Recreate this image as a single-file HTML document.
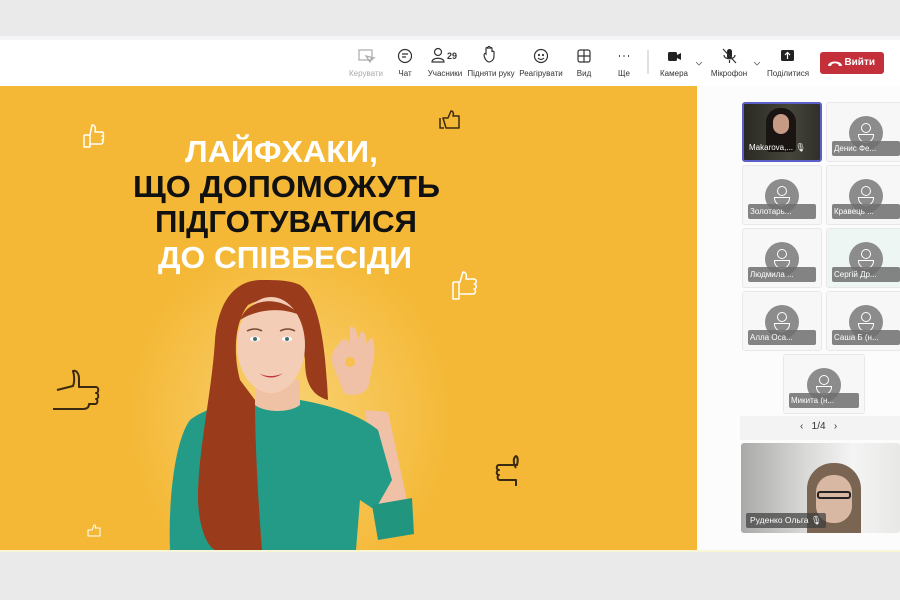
<!DOCTYPE html>
<html><head><meta charset="utf-8"><style>
body{margin:0;width:900px;height:600px;overflow:hidden;background:#ebeaea;font-family:"Liberation Sans",sans-serif;position:relative}
.abs{position:absolute}
.tb{left:0;top:40px;width:900px;height:46px;background:#fff}
.lbl{position:absolute;top:69px;font-size:8px;color:#333;transform:translateX(-50%);white-space:nowrap}
.tile{position:absolute;background:#f7f7f7;border:1px solid #e8e8e8;border-radius:3px;width:78px;height:58px;overflow:hidden}
.av{position:absolute;left:50%;top:13px;width:34px;height:34px;margin-left:-17px;border-radius:50%;background:#8c8c8c}
.av:before{content:"";position:absolute;left:12px;top:7px;width:8px;height:8px;border:1.3px solid #fff;border-radius:50%}
.av:after{content:"";position:absolute;left:9px;top:18px;width:14px;height:7px;border:1.3px solid #fff;border-radius:0 0 8px 8px}
.nm{position:absolute;left:5px;right:5px;bottom:5px;height:15px;background:rgba(110,110,110,.85);border-radius:2px;color:#fff;font-size:8px;line-height:15px;padding-left:2px;white-space:nowrap;overflow:hidden;z-index:2}
</style></head><body>
<div class="abs" style="left:0;top:0;width:900px;height:36px;background:#ebeaea"></div>
<div class="abs" style="left:0;top:36px;width:900px;height:4px;background:#f5f5f7"></div>
<div class="abs tb"></div>
<svg class="abs" style="left:0;top:40px" width="900" height="46" fill="none" stroke="#333" stroke-width="1.2">
<rect x="359" y="10" width="13" height="10" stroke="#aaa"/><path d="M366 16l4 6 1-3 3-1z" stroke="#aaa"/>
<circle cx="405" cy="16" r="6.5"/><path d="M402 14h6M402 17h4"/>
<circle cx="438" cy="12" r="3.5"/><path d="M432 22c0-5 12-5 12 0z"/>
<path d="M486 20c-3-4-2-8 0-6V9c0-2 2-2 2 0V8c0-2 2-2 2 0v1c0-2 2-2 2 0v3c0-1 2-1 2 0v4c0 4-3 6-5 6s-2-1-3-2z"/>
<circle cx="541" cy="16" r="6.5"/><circle cx="539" cy="15" r=".5"/><circle cx="543" cy="15" r=".5"/><path d="M538 18c2 2 4 2 6 0"/>
<rect x="578" y="10" width="12" height="12" rx="2"/><path d="M584 10v12M578 16h12"/>
<path d="M619 16h1M623.5 16h1M628 16h1" stroke-width="1.8"/>
<path d="M648 10v24" stroke="#ccc"/>
<rect x="668" y="12" width="9" height="9" rx="1.5" fill="#222" stroke="none"/><path d="M677 15l4-2v7l-4-2z" fill="#222" stroke="none"/>
<path d="M696 22l3 3 3-3" stroke="#666" stroke-width=".8"/>
<rect x="727" y="9" width="5" height="10" rx="2.5" fill="#222" stroke="none"/><path d="M724 15c0 5 11 5 11 0M729.5 20v3M723 9l13 14"/>
<path d="M754 22l3 3 3-3" stroke="#666" stroke-width=".8"/>
<rect x="781" y="10" width="13" height="11" rx="1.5" fill="#222" stroke="none"/><path d="M787.5 19v-6M785 15l2.5-2.5 2.5 2.5" stroke="#fff"/>
</svg>
<span class="lbl" style="left:366px;color:#aaa">Керувати</span>
<span class="lbl" style="left:405px">Чат</span>
<span class="abs" style="left:447px;top:51px;font-size:9px;font-weight:bold;color:#333">29</span>
<span class="lbl" style="left:445px">Учасники</span>
<span class="lbl" style="left:491px">Підняти руку</span>
<span class="lbl" style="left:541px">Реагірувати</span>
<span class="lbl" style="left:584px">Вид</span>
<span class="lbl" style="left:624px">Ще</span>
<span class="lbl" style="left:674px">Камера</span>
<span class="lbl" style="left:729px">Мікрофон</span>
<span class="lbl" style="left:788px">Поділитися</span>
<div class="abs" style="left:820px;top:52px;width:64px;height:22px;background:#c4303a;border-radius:3px;color:#fff;font-size:10px;font-weight:bold;line-height:22px;text-align:right;box-sizing:border-box;padding-right:9px">Вийти</div>
<svg class="abs" style="left:827px;top:58px" width="16" height="10"><path d="M1 8c0-6 14-6 14 0l-3 0-1-2c-2-1-4-1-6 0l-1 2z" fill="#fff"/></svg>

<div class="abs" style="left:0;top:86px;width:697px;height:464px;background:radial-gradient(ellipse 180px 200px at 290px 330px,#f9d274,#f4b836 90%)"></div>
<div class="abs" style="left:697px;top:86px;width:203px;height:464px;background:#fcfcfc"></div>
<svg class="abs" style="left:0;top:0" width="697" height="550">
<g font-family="Liberation Sans,sans-serif" font-weight="bold" font-size="31">
<text x="185" y="162" fill="#fff" textLength="193" lengthAdjust="spacingAndGlyphs">ЛАЙФХАКИ,</text>
<text x="133" y="197" fill="#111" textLength="307" lengthAdjust="spacingAndGlyphs">ЩО ДОПОМОЖУТЬ</text>
<text x="155" y="232" fill="#111" textLength="262" lengthAdjust="spacingAndGlyphs">ПІДГОТУВАТИСЯ</text>
<text x="158" y="268" fill="#fff" textLength="254" lengthAdjust="spacingAndGlyphs">ДО СПІВБЕСІДИ</text>
</g>
<g fill="none" stroke-width="1.5" stroke-linejoin="round">
<path d="M84 135h6l2-10c3 0 4 3 3 7h7c2 0 2 4 0 4 2 0 2 4 0 4 2 0 1 4-1 4h-12M84 135v12h6v-12" stroke="#fff"/>
<path d="M443 118h5l3-7c2 0 3 2 2 5h6v12h-13zM440 118v10h4" stroke="#3a2a10"/>
<path d="M453 282h7l3-10c3 0 4 3 3 7h8c3 0 3 5 0 5 3 0 3 5 0 5 2 0 2 5-1 5h-13M453 282v17h6v-17" stroke="#fff"/>
<path d="M57 390l16-4c2-5 1-12 0-15 3-1 6 2 6 8v8h17c3 0 3 6 0 6 3 0 3 6 0 6 2 0 2 5-1 5h-6c0 4-3 5-6 5H53" stroke="#3a2a10" stroke-width="2"/>
<path d="M516 468c-3-5-3-10 0-12 2 1 2 5 1 9h-18c-3 0-3 5 0 5-3 0-3 5 0 5-2 0-2 5 1 5h16v6" stroke="#3a2a10" stroke-width="2"/>
<path d="M88 530h4l2-5c2 0 2 2 1 3h5v8h-12z" stroke="#fff" stroke-width="1"/>
</g>
<!-- woman -->
<path d="M365 410L388 412L408 505L378 510Z" fill="#f0c1a6"/>
<path d="M190 420C210 405 240 400 262 400L300 400C330 405 360 415 378 430L392 480L375 510L360 500L356 550L170 550C168 500 175 440 190 420Z" fill="#239b86"/>
<path d="M372 505L412 498L414 534L378 540Z" fill="#22957f"/>
<path d="M338 345c5-10 12-5 12 2l0-20c4-2 8 5 8 12l3-7c3-2 6 5 5 12l5-6c3 0 4 10 3 20l-5 25c0 10-15 15-25 10l-10-25c-5-10 0-20 4-23z" fill="#f0c1a6"/>
<circle cx="350" cy="362" r="5" fill="#f7c050"/>
<path d="M255 380h45v25c-10 8-35 8-45 0z" fill="#efc2a6"/>
<path d="M262 280C232 280 218 305 215 340C212 390 200 440 198 490C197 520 205 545 215 550L262 550C258 500 255 440 255 400L240 380C232 350 236 320 248 305C265 295 290 300 300 320L305 360C305 380 310 395 328 400C326 360 322 300 300 285C290 280 275 280 262 280Z" fill="#9a3c1c"/>
<ellipse cx="271" cy="345" rx="34" ry="48" fill="#f3cdb6"/>
<path d="M240 320c8-22 40-26 60-5-20-8-42-6-60 5z" fill="#9a3c1c"/>
<path d="M259 373c6 4 17 4 24 0c-7 6-17 6-24 0z" fill="#c2343f"/>
<ellipse cx="255" cy="339" rx="5" ry="2.5" fill="#fff"/><ellipse cx="287" cy="339" rx="5" ry="2.5" fill="#fff"/>
<circle cx="255" cy="339" r="2" fill="#4a6f72"/><circle cx="287" cy="339" r="2" fill="#4a6f72"/>
<path d="M247 331q8-4 15 0M280 331q8-4 15 0" stroke="#7a4a30" stroke-width="1.5" fill="none"/>
</svg>

<div class="tile" style="left:742px;top:102px;width:76px;height:56px;border:2px solid #5b5fc7;background:linear-gradient(90deg,#2a2a24,#46453a 60%,#30302a)"><div style="position:absolute;left:22px;top:4px;width:30px;height:44px;border-radius:14px 14px 4px 4px;background:#1a1412"></div><div style="position:absolute;left:29px;top:10px;width:16px;height:20px;border-radius:8px;background:#c79a86"></div><div class="nm" style="background:none;left:3px">Makarova,... 🎙</div></div>
<div class="tile" style="left:826px;top:102px"><div class="av"></div><div class="nm">Денис Фе...</div></div>
<div class="tile" style="left:742px;top:165px"><div class="av"></div><div class="nm">Золотарь...</div></div>
<div class="tile" style="left:826px;top:165px"><div class="av"></div><div class="nm">Кравець ...</div></div>
<div class="tile" style="left:742px;top:228px"><div class="av"></div><div class="nm">Людмила ...</div></div>
<div class="tile" style="left:826px;top:228px;background:#eef6f4"><div class="av"></div><div class="nm">Сергій Др...</div></div>
<div class="tile" style="left:742px;top:291px"><div class="av"></div><div class="nm">Алла Оса...</div></div>
<div class="tile" style="left:826px;top:291px"><div class="av"></div><div class="nm">Саша Б (н...</div></div>
<div class="tile" style="left:783px;top:354px;width:80px;height:58px"><div class="av"></div><div class="nm">Микита (н...</div></div>
<div class="abs" style="left:740px;top:416px;width:160px;height:24px;background:#f3f3f3"></div>
<div class="abs" style="left:800px;top:421px;font-size:10px;color:#333">‹&nbsp;&nbsp;&nbsp;1/4&nbsp;&nbsp;&nbsp;›</div>
<div class="abs" style="left:741px;top:443px;width:159px;height:90px;border-radius:3px;overflow:hidden;background:linear-gradient(90deg,#a9a9a7,#d8d8d6 40%,#f4f4f4 70%,#e8e8e6)">
<div style="position:absolute;left:66px;top:20px;width:54px;height:80px;border-radius:26px 26px 6px 6px;background:#7a6552"></div>
<div style="position:absolute;left:75px;top:32px;width:36px;height:48px;border-radius:17px;background:#d8b8a3"></div>
<div style="position:absolute;left:76px;top:48px;width:34px;height:8px;border:2px solid #222;box-sizing:border-box;border-radius:3px"></div>
<div style="position:absolute;left:5px;bottom:5px;height:15px;padding:0 4px;background:rgba(60,60,60,.7);border-radius:2px;color:#fff;font-size:8.5px;line-height:15px">Руденко Ольга 🎙</div>
</div>
<div class="abs" style="left:0;top:550px;width:900px;height:2px;background:#f8f6d8"></div>
</body></html>
